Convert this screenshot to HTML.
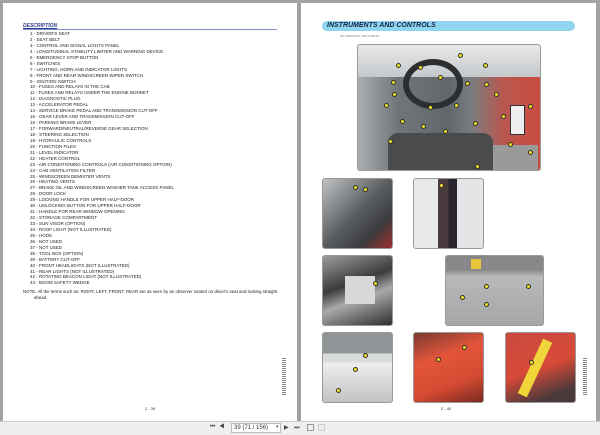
<!DOCTYPE html>
<html><head><meta charset="utf-8"><style>
*{margin:0;padding:0;box-sizing:border-box}
body{width:600px;height:435px;background:#a3a3a3;position:relative;overflow:hidden;font-family:"Liberation Sans",sans-serif}
.pg{position:absolute;background:#fff;top:3px;height:418px}
.tb{position:absolute;left:0;top:421px;width:600px;height:14px;background:#efefef;border-top:1px solid #ccc}
.list{position:absolute;left:30px;top:31px;font-size:4.5px;line-height:5.93px;color:#222;white-space:nowrap}
.ph{position:absolute;border-radius:3px;overflow:hidden;border:1px solid #999}
.m{position:absolute;width:5px;height:5px;border-radius:50%;background:#f2e21a;border:0.7px solid #333}
</style></head><body>
<div class="pg" style="left:3px;width:294px"></div>
<div class="pg" style="left:301px;width:295px"></div>
<div style="position:absolute;left:23px;top:23px;font-size:5px;color:#2a3f8f;font-weight:bold;font-style:italic;text-decoration:underline">DESCRIPTION</div>
<div style="position:absolute;left:23px;top:29px;width:254px;height:1px;background:#7c8fc0"></div>
<div class="list">1 - DRIVER'S SEAT<br>2 - SEAT BELT<br>3 - CONTROL AND SIGNAL LIGHTS PANEL<br>4 - LONGITUDINAL STABILITY LIMITER AND WARNING DEVICE<br>5 - EMERGENCY STOP BUTTON<br>6 - SWITCHES<br>7 - LIGHTING, HORN AND INDICATOR LIGHTS<br>8 - FRONT AND REAR WINDSCREEN WIPER SWITCH<br>9 - IGNITION SWITCH<br>10 - FUSES AND RELAYS IN THE CAB<br>11 - FUSES AND RELAYS UNDER THE ENGINE BONNET<br>12 - DIAGNOSTIC PLUG<br>13 - ACCELERATOR PEDAL<br>14 - SERVICE BRAKE PEDAL AND TRANSMISSION CUT-OFF<br>15 - GEAR LEVER AND TRANSMISSION CUT-OFF<br>16 - PARKING BRAKE LEVER<br>17 - FORWARD/NEUTRAL/REVERSE GEAR SELECTION<br>18 - STEERING SELECTION<br>19 - HYDRAULIC CONTROLS<br>20 - FUNCTION FILES<br>21 - LEVEL INDICATOR<br>22 - HEATER CONTROL<br>23 - AIR CONDITIONING CONTROLS (AIR CONDITIONING OPTION)<br>24 - CAB VENTILATION FILTER<br>25 - WINDSCREEN DEMISTER VENTS<br>26 - HEATING VENTS<br>27 - BRAKE OIL AND WINDSCREEN WASHER TANK ACCESS PANEL<br>28 - DOOR LOCK<br>29 - LOCKING HANDLE FOR UPPER HALF-DOOR<br>30 - UNLOCKING BUTTON FOR UPPER HALF-DOOR<br>31 - HANDLE FOR REAR WINDOW OPENING<br>32 - STORAGE COMPARTMENT<br>33 - SUN VISOR (OPTION)<br>34 - ROOF LIGHT (NOT ILLUSTRATED)<br>35 - HOOK<br>36 - NOT USED<br>37 - NOT USED<br>38 - TOOL BOX (OPTION)<br>39 - BATTERY CUT-OFF<br>40 - FRONT HEADLIGHTS (NOT ILLUSTRATED)<br>41 - REAR LIGHTS (NOT ILLUSTRATED)<br>42 - ROTATING BEACON LIGHT (NOT ILLUSTRATED)<br>43 - BOOM SAFETY WEDGE</div>
<div style="position:absolute;left:23px;top:289px;font-size:4.4px;line-height:6px;color:#222;width:262px">NOTE: All the terms such as: RIGHT, LEFT, FRONT, REAR are as seen by an observer seated on driver's seat and looking straight<br>&nbsp;&nbsp;&nbsp;&nbsp;&nbsp;&nbsp;&nbsp;&nbsp;&nbsp;ahead.</div>
<div style="position:absolute;left:145px;top:406px;font-size:4px;color:#333">2 - 39</div>
<div style="position:absolute;left:282px;top:358px;width:4px;height:38px;background:repeating-linear-gradient(#888 0 1px,#fff 1px 2px)"></div>
<div style="position:absolute;left:583px;top:358px;width:4px;height:38px;background:repeating-linear-gradient(#888 0 1px,#fff 1px 2px)"></div>

<div style="position:absolute;left:322px;top:21px;width:253px;height:10px;background:#8fd5f0;border-radius:5px"></div>
<div style="position:absolute;left:327px;top:22px;font-size:7px;font-weight:bold;font-style:italic;color:#13234a">INSTRUMENTS AND CONTROLS</div>
<div style="position:absolute;left:340px;top:34px;font-size:3px;color:#777">MT 1840 EASY 100 ST3B S2</div>

<div class="ph" style="left:357px;top:44px;width:184px;height:127px;background:linear-gradient(90deg,#a9aeb0 0%,#70757a 22%,#62676b 50%,#7a7d80 62%,#b8574f 80%,#cc4c42 100%)">
 <div style="position:absolute;left:0;top:0;width:184px;height:32px;background:linear-gradient(#e8e8e8,#c5c9cb)"></div>
 <div style="position:absolute;left:45px;top:14px;width:60px;height:50px;border:6px solid #2c2e30;border-radius:50%"></div>
 <div style="position:absolute;left:30px;top:88px;width:105px;height:40px;background:#4a4b4d;border-radius:10px 10px 0 0"></div>
 <div style="position:absolute;left:135px;top:100px;width:45px;height:25px;background:#9a9a9a"></div>
 <div style="position:absolute;left:152px;top:60px;width:15px;height:30px;background:#eee;border:1px solid #333"></div>
 <div class="m" style="left:100px;top:8px"></div><div class="m" style="left:38px;top:18px"></div><div class="m" style="left:60px;top:20px"></div><div class="m" style="left:125px;top:18px"></div><div class="m" style="left:33px;top:35px"></div><div class="m" style="left:80px;top:30px"></div><div class="m" style="left:107px;top:36px"></div><div class="m" style="left:126px;top:37px"></div><div class="m" style="left:34px;top:47px"></div><div class="m" style="left:26px;top:58px"></div><div class="m" style="left:70px;top:60px"></div><div class="m" style="left:96px;top:58px"></div><div class="m" style="left:136px;top:47px"></div><div class="m" style="left:170px;top:59px"></div><div class="m" style="left:42px;top:74px"></div><div class="m" style="left:63px;top:79px"></div><div class="m" style="left:115px;top:76px"></div><div class="m" style="left:143px;top:69px"></div><div class="m" style="left:30px;top:94px"></div><div class="m" style="left:150px;top:97px"></div><div class="m" style="left:170px;top:105px"></div><div class="m" style="left:117px;top:119px"></div><div class="m" style="left:85px;top:84px"></div>
</div>

<div class="ph" style="left:322px;top:178px;width:71px;height:71px;background:linear-gradient(135deg,#bfc3c5,#5a5d60 50%,#3a3c3e 75%,#9b2d2d)"><div class="m" style="left:30px;top:6px"></div><div class="m" style="left:40px;top:8px"></div></div>
<div class="ph" style="left:413px;top:178px;width:71px;height:71px;background:linear-gradient(90deg,#e8e9ea 0 35%,#4a3c3e 35% 50%,#2a2630 50% 62%,#e4e5e7 62%)"><div class="m" style="left:25px;top:4px"></div></div>
<div class="ph" style="left:322px;top:255px;width:71px;height:71px;background:linear-gradient(160deg,#9a9c9e,#3a3c3e 40%,#aaa 60%,#2c2e30)"><div style="position:absolute;left:22px;top:20px;width:30px;height:28px;background:#d8d8d8"></div><div class="m" style="left:50px;top:25px"></div></div>
<div class="ph" style="left:445px;top:255px;width:99px;height:71px;background:linear-gradient(180deg,#888 0 20%,#b7b9ba 30%,#a4a6a8)"><div style="position:absolute;left:25px;top:3px;width:10px;height:10px;background:#e8c637"></div><div class="m" style="left:38px;top:28px"></div><div class="m" style="left:80px;top:28px"></div><div class="m" style="left:14px;top:39px"></div><div class="m" style="left:38px;top:46px"></div></div>
<div class="ph" style="left:322px;top:332px;width:71px;height:71px;background:linear-gradient(180deg,#8f9496 0 30%,#d8dadb 30% 40%,#eceeee 45%,#c0c2c3)"><div class="m" style="left:40px;top:20px"></div><div class="m" style="left:30px;top:34px"></div><div class="m" style="left:13px;top:55px"></div></div>
<div class="ph" style="left:413px;top:332px;width:71px;height:71px;background:linear-gradient(160deg,#7a3a30,#e2553a 35%,#d44a32 70%,#7a2a22)"><div class="m" style="left:48px;top:12px"></div><div class="m" style="left:22px;top:24px"></div></div>
<div class="ph" style="left:505px;top:332px;width:71px;height:71px;background:linear-gradient(160deg,#c94a3e,#d84a38 50%,#4a3a3a 85%)"><div style="position:absolute;left:24px;top:5px;width:10px;height:60px;background:#f0d63a;transform:rotate(25deg)"></div><div class="m" style="left:23px;top:27px"></div></div>
<div style="position:absolute;left:441px;top:406px;font-size:4px;color:#333">2 - 40</div>

<div class="tb"></div>
<div style="position:absolute;left:210px;top:424px;font-size:6px;color:#444;letter-spacing:1px">⏮ ◀</div>
<div style="position:absolute;left:231px;top:423px;width:50px;height:10px;border:1px solid #bbb;background:#fff;font-size:6px;line-height:8px;padding-left:2px;color:#333">39 (71 / 156)</div>
<div style="position:absolute;left:276px;top:424px;font-size:5px;color:#555">▾</div>
<div style="position:absolute;left:284px;top:424px;font-size:6px;color:#444;letter-spacing:2px">▶ ⏭</div>
<div style="position:absolute;left:307px;top:424px;width:7px;height:7px;border:1px solid #999"></div>
<div style="position:absolute;left:318px;top:424px;width:7px;height:7px;border:1px solid #ccc"></div>
</body></html>
